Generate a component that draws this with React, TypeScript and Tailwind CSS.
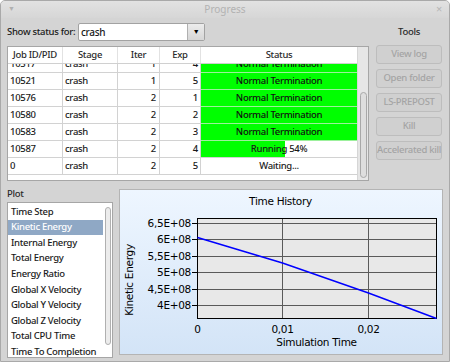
import React from "react";

const font = { fontFamily: '"Noto Sans", "Open Sans", sans-serif' };

type Row = { id: string; stage: string; iter: string; exp: string; status: string; pct?: number; green?: boolean };

const rows: Row[] = [
  { id: "10517", stage: "crash", iter: "1", exp: "4", status: "Normal Termination", green: true },
  { id: "10521", stage: "crash", iter: "1", exp: "5", status: "Normal Termination", green: true },
  { id: "10576", stage: "crash", iter: "2", exp: "1", status: "Normal Termination", green: true },
  { id: "10580", stage: "crash", iter: "2", exp: "2", status: "Normal Termination", green: true },
  { id: "10583", stage: "crash", iter: "2", exp: "3", status: "Normal Termination", green: true },
  { id: "10587", stage: "crash", iter: "2", exp: "4", status: "Running 54%", pct: 54 },
  { id: "0", stage: "crash", iter: "2", exp: "5", status: "Waiting..." },
];

const plotItems = [
  "Time Step",
  "Kinetic Energy",
  "Internal Energy",
  "Total Energy",
  "Energy Ratio",
  "Global X Velocity",
  "Global Y Velocity",
  "Global Z Velocity",
  "Total CPU Time",
  "Time To Completion",
];

const tools = ["View log", "Open folder", "LS-PREPOST", "Kill", "Accelerated kill"];

function Chart() {
  const yTicks = [
    { l: "6,5E+08", v: 6.5 },
    { l: "6E+08", v: 6.0 },
    { l: "5,5E+08", v: 5.5 },
    { l: "5E+08", v: 5.0 },
    { l: "4,5E+08", v: 4.5 },
    { l: "4E+08", v: 4.0 },
  ];
  const yOf = (v: number) => 33 + ((6.5 - v) / 0.5) * 16.4;
  const cf = { fontFamily: '"DejaVu Sans", sans-serif' };
  return (
    <svg width="322" height="164" style={cf}>
      <text x="160.5" y="14.5" fontSize="10.5" textAnchor="middle" fill="#000">Time History</text>
      <rect x="77.5" y="28.5" width="239" height="100" fill="#e8e8e8" />
      {yTicks.map((t) => (
        <g key={t.l}>
          <line x1="77" x2="317" y1={Math.round(yOf(t.v)) + 0.5} y2={Math.round(yOf(t.v)) + 0.5} stroke="#5a5a5a" strokeWidth="1" />
          <line x1="72" x2="77" y1={Math.round(yOf(t.v)) + 0.5} y2={Math.round(yOf(t.v)) + 0.5} stroke="#000" strokeWidth="1" />
          <text x="71" y={Math.round(yOf(t.v)) + 4} fontSize="10.5" textAnchor="end" fill="#000">{t.l}</text>
        </g>
      ))}
      <line x1="162.5" x2="162.5" y1="28" y2="129" stroke="#5a5a5a" strokeWidth="1" />
      <line x1="248.5" x2="248.5" y1="28" y2="129" stroke="#5a5a5a" strokeWidth="1" />
      <rect x="77.5" y="28.5" width="239" height="100" fill="none" stroke="#000" strokeWidth="1" />
      <polyline points="77.5,47.5 162.5,73 248.5,103 316.5,128.5" fill="none" stroke="#0000ff" strokeWidth="1.5" />
      <text x="77.5" y="143" fontSize="10.5" textAnchor="middle" fill="#000">0</text>
      <text x="162.5" y="143" fontSize="10.5" textAnchor="middle" fill="#000">0,01</text>
      <text x="248.5" y="143" fontSize="10.5" textAnchor="middle" fill="#000">0,02</text>
      <text x="196.5" y="155.5" fontSize="10.5" textAnchor="middle" fill="#000">Simulation Time</text>
      <text x="0" y="0" fontSize="10.5" textAnchor="middle" fill="#000" transform="translate(12.5,90) rotate(-90)">Kinetic Energy</text>
    </svg>
  );
}

export default function App() {
  return (
    <div
      className="w-[450px] h-[362px] bg-[#d4d4d4] flex flex-col overflow-hidden rounded-t-[5px] border border-[#a9a9a9] text-[9.5px] font-medium tracking-[-0.3px] text-[#1a1a1a]"
      style={font}
    >
      {/* title bar */}
      <div className="h-[17px] flex items-center px-[7px] bg-gradient-to-b from-[#e2e2e2] to-[#d6d6d6]">
        <span className="text-[7px] text-[#b0b0b0] w-[20px]">▼</span>
        <span className="flex-1 text-center text-[10px] text-[#b2b2b2] tracking-normal font-normal">Progress</span>
        <span className="w-[20px] text-right text-[11px] text-[#b8b8b8]">×</span>
      </div>

      {/* top section */}
      <div className="flex px-[6px] pt-[5px]">
        <div className="w-[362px] flex flex-col">
          <div className="h-[18px] flex items-center">
            <span className="w-[71px] whitespace-nowrap">Show status for:</span>
            <div className="flex h-[18px] w-[127px] rounded-[2px] border border-[#a2a2a2] bg-white">
              <div className="flex-1 flex items-center pl-[2px] text-[10px]">crash</div>
              <div className="w-[17px] flex items-center justify-center border-l border-[#b0b0b0] bg-gradient-to-b from-[#ececec] to-[#d6d6d6]">
                <span className="text-[7px] text-black">▼</span>
              </div>
            </div>
          </div>
          <div className="mt-[5px] h-[135px] border border-[#a6a6a6] bg-white flex">
            <div className="flex-1 flex flex-col">
              <div className="h-[17px] flex border-b border-[#d0d0d0] text-[#2a2a2a] relative z-10 bg-white">
                <div className="w-[55px] flex items-center justify-center border-r border-[#e2e2e2]">Job ID/PID</div>
                <div className="w-[55px] flex items-center justify-center border-r border-[#e2e2e2]">Stage</div>
                <div className="w-[42px] flex items-center justify-center border-r border-[#e2e2e2]">Iter</div>
                <div className="w-[41px] flex items-center justify-center border-r border-[#e2e2e2]">Exp</div>
                <div className="flex-1 flex items-center justify-center">Status</div>
              </div>
              <div className="flex-1 overflow-hidden">
                <div className="mt-[-8px]">
                  {rows.map((r) => (
                    <div key={r.id} className="h-[17px] flex">
                      <div className="w-[55px] flex items-center pl-[2px] border-r border-b border-[#d2d2d2]">{r.id}</div>
                      <div className="w-[55px] flex items-center pl-[2px] border-r border-b border-[#d2d2d2]">{r.stage}</div>
                      <div className="w-[42px] flex items-center justify-end pr-[3px] border-r border-b border-[#d2d2d2]">{r.iter}</div>
                      <div className="w-[41px] flex items-center justify-end pr-[2px] border-r border-b border-[#d2d2d2]">{r.exp}</div>
                      {r.green ? (
                        <div className="flex-1 flex items-center justify-center bg-[#00ff00] border-b border-[#9cf09c] text-[#101010]">
                          {r.status}
                        </div>
                      ) : r.pct !== undefined ? (
                        <div className="flex-1 relative border-b border-[#d2d2d2]">
                          <div className="h-full bg-[#00ff00]" style={{ width: `${r.pct}%` }} />
                          <div className="absolute inset-0 flex items-center justify-center">{r.status}</div>
                        </div>
                      ) : (
                        <div className="flex-1 flex items-center justify-center border-b border-[#d2d2d2]">{r.status}</div>
                      )}
                    </div>
                  ))}
                </div>
              </div>
            </div>
            <div className="w-[11px] bg-[#e6e6e6] border-l border-[#d6d6d6] pt-[45px] pl-[2px]">
              <div className="h-[86px] w-[7px] rounded-full border border-[#a8a8a8] bg-[#dedede]" />
            </div>
          </div>
        </div>

        <div className="ml-[7px] w-[66px] flex flex-col">
          <div className="h-[18px] flex items-center justify-center text-[#2a2a2a]">Tools</div>
          <div className="mt-[4px] flex flex-col gap-[5px]">
            {tools.map((t) => (
              <div
                key={t}
                className="h-[19px] flex items-center justify-center rounded-[3px] border border-[#bdbdbd] bg-[#d0d0d0] text-[#a4a4a4] whitespace-nowrap"
              >
                {t}
              </div>
            ))}
          </div>
        </div>
      </div>

      {/* bottom section */}
      <div className="flex px-[6px] mt-[6px]">
        <div className="w-[106px] flex flex-col">
          <div className="h-[15px] flex items-center text-[#2a2a2a]">Plot</div>
          <div className="h-[156px] border border-[#a6a6a6] bg-white flex">
            <div className="flex-1 overflow-hidden pt-[1px]">
              {plotItems.map((p, i) => (
                <div
                  key={p}
                  className={
                    i === 1
                      ? "h-[15.6px] flex items-center pl-[3px] whitespace-nowrap bg-[#8fa8c5] text-white"
                      : "h-[15.6px] flex items-center pl-[3px] whitespace-nowrap"
                  }
                >
                  {p}
                </div>
              ))}
            </div>
            <div className="w-[9px] pt-[4px] pl-[2px]">
              <div className="h-[138px] w-[6px] rounded-full border border-[#b0b0b0] bg-[#ececec]" />
            </div>
          </div>
        </div>
        <div className="ml-[6px] mt-[2px] w-[324px] h-[166px] border border-[#b4b4b4] bg-gradient-to-b from-[#eef6ff] to-[#d3e4f7]">
          <Chart />
        </div>
      </div>
    </div>
  );
}
